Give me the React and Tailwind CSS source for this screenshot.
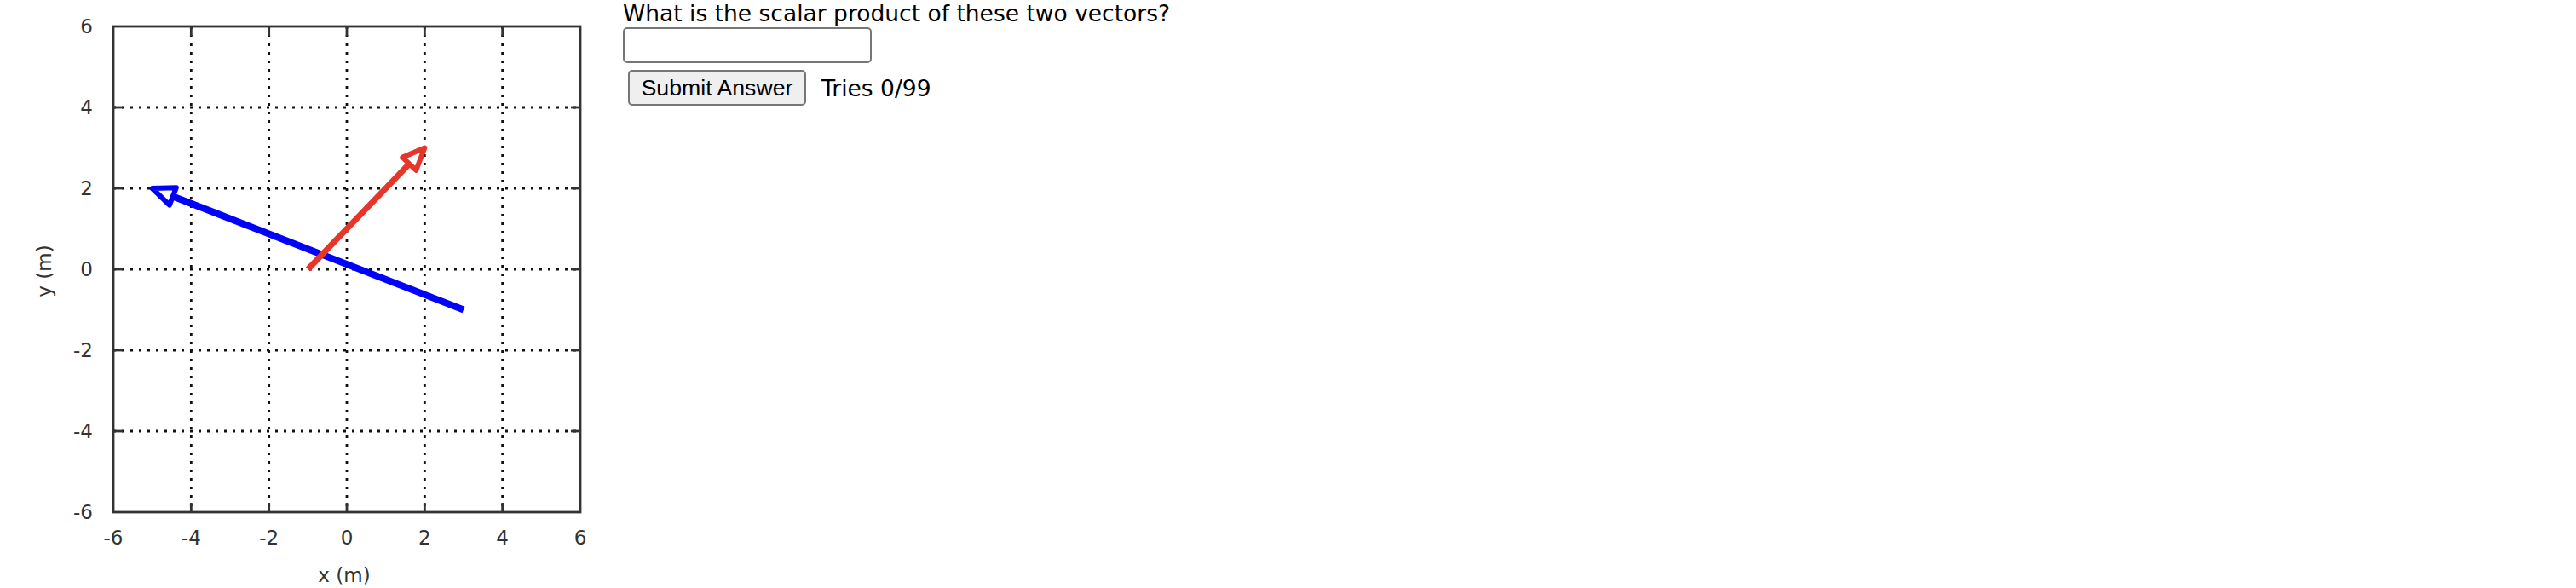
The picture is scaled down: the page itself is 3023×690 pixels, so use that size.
import React from "react";

const L = 133, R = 681, T = 31, B = 601;
const ux = (R - L) / 12;
const uy = (B - T) / 12;
const px = (x) => L + (x + 6) * ux;
const py = (y) => T + (6 - y) * uy;

function Arrow({ x1, y1, x2, y2, color, width, headLen = 26, headHalf = 11 }) {
  const ax = px(x1), ay = py(y1), bx = px(x2), by = py(y2);
  const dx = bx - ax, dy = by - ay;
  const len = Math.hypot(dx, dy);
  const ux_ = dx / len, uy_ = dy / len;
  const nx = -uy_, ny = ux_;
  const mx = bx - ux_ * headLen, my = by - uy_ * headLen;
  const p1 = `${bx},${by}`;
  const p2 = `${mx + nx * headHalf},${my + ny * headHalf}`;
  const p3 = `${mx - nx * headHalf},${my - ny * headHalf}`;
  return (
    <g>
      <line x1={ax} y1={ay} x2={mx} y2={my} stroke={color} strokeWidth={width} />
      <polygon points={`${p1} ${p2} ${p3}`} fill="none" stroke={color} strokeWidth={6} strokeLinejoin="round" />
    </g>
  );
}

function Plot() {
  const ticks = [-6, -4, -2, 0, 2, 4, 6];
  const inner = [-4, -2, 0, 2, 4];
  const labelCls = "font-['DejaVu_Sans',sans-serif] text-[23px] fill-[#333]";
  return (
    <svg width="720" height="690" viewBox="0 0 720 690" className="shrink-0 block">
      {inner.map((v) => (
        <line key={"gx" + v} x1={px(v)} y1={T} x2={px(v)} y2={B} stroke="#111" strokeWidth="2.8" strokeDasharray="3 7" />
      ))}
      {inner.map((v) => (
        <line key={"gy" + v} x1={L} y1={py(v)} x2={R} y2={py(v)} stroke="#111" strokeWidth="2.8" strokeDasharray="3 7" />
      ))}
      {inner.map((v) => (
        <g key={"t" + v} stroke="#333" strokeWidth="2.8">
          <line x1={px(v)} y1={B} x2={px(v)} y2={B - 11} />
          <line x1={px(v)} y1={T} x2={px(v)} y2={T + 11} />
          <line x1={L} y1={py(v)} x2={L + 11} y2={py(v)} />
          <line x1={R} y1={py(v)} x2={R - 11} y2={py(v)} />
        </g>
      ))}
      <rect x={L} y={T} width={R - L} height={B - T} fill="none" stroke="#333" strokeWidth="2.8" />
      {ticks.map((v) => (
        <text key={"lx" + v} x={px(v)} y={639} textAnchor="middle" className={labelCls}>{v}</text>
      ))}
      {ticks.map((v) => (
        <text key={"ly" + v} x={109} y={py(v) + 8} textAnchor="end" className={labelCls}>{v}</text>
      ))}
      <text x={404} y={683} textAnchor="middle" className={labelCls}>x (m)</text>
      <text x={0} y={0} textAnchor="middle" className={labelCls} transform="translate(60,318) rotate(-90)">y (m)</text>
      <Arrow x1={3} y1={-1} x2={-5} y2={2} color="#0000ff" width={8} />
      <Arrow x1={-1} y1={0} x2={2} y2={3} color="#e8352a" width={7} />
    </svg>
  );
}

export default function App() {
  return (
    <div className="flex items-start bg-white w-[3023px] h-[690px] overflow-hidden">
      <Plot />
      <div className="pl-[11px] flex flex-col items-start font-['DejaVu_Sans',Verdana,sans-serif]">
        <div className="text-[26.5px] leading-[31px] text-black whitespace-nowrap">
          What is the scalar product of these two vectors?
        </div>
        <input
          type="text"
          className="mt-[1px] w-[292px] h-[42px] border-2 border-[#767676] rounded-[5px] bg-white outline-none"
        />
        <div className="mt-[8px] flex items-center">
          <button className="ml-[6px] w-[209px] h-[42px] bg-[#efefef] border-2 border-[#767676] rounded-[5px] text-[26.67px] leading-none text-black font-['Liberation_Sans',Arial,sans-serif]">
            Submit Answer
          </button>
          <span className="ml-[18px] text-[26.5px] leading-[31px] text-black whitespace-nowrap">
            Tries 0/99
          </span>
        </div>
      </div>
    </div>
  );
}
